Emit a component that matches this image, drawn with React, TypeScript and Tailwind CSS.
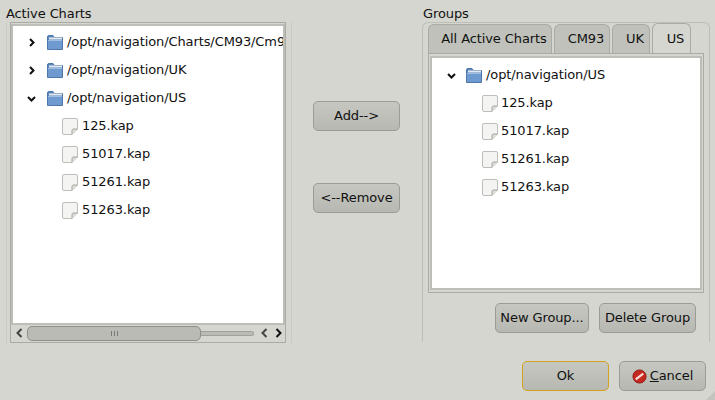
const font = "font-['DejaVu_Sans',sans-serif]";

function Folder() {
  return (
    <svg width="16" height="16" viewBox="0 0 16 16" className="shrink-0">
      <path d="M0.5 3 Q0.5 1.5 2 1.5 H6 L7.5 3.5 H15.5 V15.5 H0.5 Z" fill="#5c86bd" stroke="#4d76ab" />
      <rect x="2" y="3.5" width="13" height="2" fill="#e4e9f0" />
      <path d="M1 6 H15 V15 H1 Z" fill="#6f9ad0" />
      <rect x="1" y="6" width="14" height="1" fill="#9dbde3" />
    </svg>
  );
}

function Page() {
  return (
    <svg width="16" height="17" viewBox="0 0 16 17" className="shrink-0">
      <path d="M2 0.5 H14 Q15.5 0.5 15.5 2 V11 L10 16.5 H2 Q0.5 16.5 0.5 15 V2 Q0.5 0.5 2 0.5 Z" fill="#f4f4f2" stroke="#bdbdb9" />
      <path d="M15.5 11 H11.5 Q10 11 10 12.5 V16.5" fill="#dcdcd8" stroke="#a5a5a0" />
    </svg>
  );
}

function Arrow({ open }: { open?: boolean }) {
  return (
    <svg width="9" height="9" viewBox="0 0 9 9" className="shrink-0">
      <path d={open ? "M1 3 L4.5 6.5 L8 3" : "M3 1 L6.5 4.5 L3 8"} fill="none" stroke="#111" strokeWidth="2" />
    </svg>
  );
}

function FolderRow({ label, open, pad, gap }: { label: string; open?: boolean; pad: string; gap: string }) {
  return (
    <div className={`flex h-7 items-center whitespace-nowrap ${pad}`}>
      <Arrow open={open} />
      <div className={`${gap} mr-[4px]`}>
        <Folder />
      </div>
      <span>{label}</span>
    </div>
  );
}

function FileRow({ label, pad, gap }: { label: string; pad: string; gap: string }) {
  return (
    <div className={`flex h-7 items-center ${pad}`}>
      <div className={gap}>
        <Page />
      </div>
      <span>{label}</span>
    </div>
  );
}

function Btn({ children, focus, className }: { children: React.ReactNode; focus?: boolean; className: string }) {
  return (
    <button
      type="button"
      className={`flex h-[30px] items-center justify-center rounded-[5px] border bg-gradient-to-b from-[#c5c7c0] to-[#b6b8b1] text-[#111] ${
        focus ? "border-[#d3a21f]" : "border-[#9a9c95]"
      } ${className}`}
    >
      {children}
    </button>
  );
}

function Tab({ label, active, className }: { label: string; active?: boolean; className: string }) {
  return (
    <div
      className={`flex items-center justify-center rounded-t-[6px] border border-b-0 border-[#a9aba4] pl-2 ${
        active ? "h-[30px] bg-[#d4d6cf]" : "h-[29px] bg-[#bfc1ba]"
      } ${className}`}
    >
      {label}
    </div>
  );
}

const files = ["125.kap", "51017.kap", "51261.kap", "51263.kap"];

export default function App() {
  return (
    <div className={`relative flex h-[400px] w-[715px] flex-col overflow-hidden bg-[#d4d6cf] text-[13px] leading-4 tracking-[-0.1px] text-[#111] ${font}`}>
      <div className="flex h-[343px]">
        {/* left panel */}
        <div className="ml-[6px] flex w-[286px] flex-col pt-[6px]">
          <div className="h-4">Active Charts</div>
          <div className="flex flex-1 flex-col border-x border-[#c9cbc4] px-[3px]">
            <div className="flex w-[276px] flex-1 flex-col border border-[#a9aba4] py-[1px]">
              <div className="h-[301px] overflow-hidden border-2 border-[#bcbeb7] bg-white pt-[2px]">
                <FolderRow label="/opt/navigation/Charts/CM93/Cm93" pad="pl-[14px]" gap="ml-[11px]" />
                <FolderRow label="/opt/navigation/UK" pad="pl-[14px]" gap="ml-[11px]" />
                <FolderRow label="/opt/navigation/US" open pad="pl-[14px]" gap="ml-[11px]" />
                {files.map((f) => (
                  <FileRow key={f} label={f} pad="pl-[49px]" gap="mr-[4px]" />
                ))}
              </div>
              <div className="flex flex-1 items-center pl-[5px]">
                <svg className="shrink-0" width="7" height="10" viewBox="0 0 7 10"><path d="M5.5 1 L1.5 5 L5.5 9" fill="none" stroke="#444" strokeWidth="2" /></svg>
                <div className="ml-[4px] flex h-[15px] w-[174px] shrink-0 items-center justify-center gap-[2px] rounded-[5px] border border-[#8e908a] bg-[#b9bbb4]">
                  <span className="h-[5px] w-px bg-[#77797a]" />
                  <span className="h-[5px] w-px bg-[#77797a]" />
                  <span className="h-[5px] w-px bg-[#77797a]" />
                </div>
                <div className="h-[5px] w-[53px] shrink-0 rounded-r-[3px] border border-l-0 border-[#a0a29b] bg-[#b9bbb4]" />
                <svg className="ml-[7px] shrink-0" width="7" height="10" viewBox="0 0 7 10"><path d="M5.5 1 L1.5 5 L5.5 9" fill="none" stroke="#444" strokeWidth="2" /></svg>
                <svg className="ml-[7px] shrink-0" width="7" height="10" viewBox="0 0 7 10"><path d="M1.5 1 L5.5 5 L1.5 9" fill="none" stroke="#111" strokeWidth="2" /></svg>
              </div>
            </div>
          </div>
        </div>

        {/* middle buttons */}
        <div className="ml-[21px] flex w-[87px] flex-col pt-[101px]">
          <Btn className="w-[87px]">Add--&gt;</Btn>
          <Btn className="mt-[52px] w-[87px]">&lt;--Remove</Btn>
        </div>

        {/* right panel */}
        <div className="ml-[22px] flex w-[288px] flex-col pt-[6px]">
          <div className="ml-[1px] h-4">Groups</div>
          <div className="flex h-[320px] flex-col rounded-t-[6px] border border-b-0 border-[#bcbeb7] px-[5px]">
            <div className="flex h-[30px] items-end">
              <Tab label="All Active Charts" className="w-[124px]" />
              <Tab label="CM93" className="ml-[2px] w-[56px]" />
              <Tab label="UK" className="ml-[2px] w-[38px]" />
              <Tab label="US" active className="ml-[2px] w-[39px]" />
            </div>
            <div className="h-[240px] w-[276px] border border-[#a9aba4] px-[1px] py-[2px]">
              <div className="h-full border-2 border-[#bcbeb7] bg-white pt-[3px]">
                <FolderRow label="/opt/navigation/US" open pad="pl-[15px]" gap="ml-[10px]" />
                {files.map((f) => (
                  <FileRow key={f} label={f} pad="pl-[50px]" gap="mr-[3px]" />
                ))}
              </div>
            </div>
            <div className="mt-[10px] flex justify-end gap-[10px] pr-[8px]">
              <Btn className="w-[94px]">New Group...</Btn>
              <Btn className="w-[97px]">Delete Group</Btn>
            </div>
          </div>
        </div>
      </div>

      {/* dialog buttons */}
      <div className="mt-[18px] flex justify-end gap-[10px] pr-[9px]">
        <Btn focus className="w-[87px]">Ok</Btn>
        <Btn className="w-[87px]">
          <svg width="15" height="15" viewBox="0 0 16 16" className="mr-[3px]">
            <circle cx="8" cy="8" r="7" fill="#c5281f" stroke="#8f1a14" />
            <path d="M4 11 L12 5" stroke="#f6dcd8" strokeWidth="2.4" />
          </svg>
          <span><span className="underline">C</span>ancel</span>
        </Btn>
      </div>

      {/* resize grip */}
      <div className="absolute bottom-0 right-0 h-0 w-0 border-b-[9px] border-l-[9px] border-b-[#c2c4bd] border-l-transparent" />
    </div>
  );
}
